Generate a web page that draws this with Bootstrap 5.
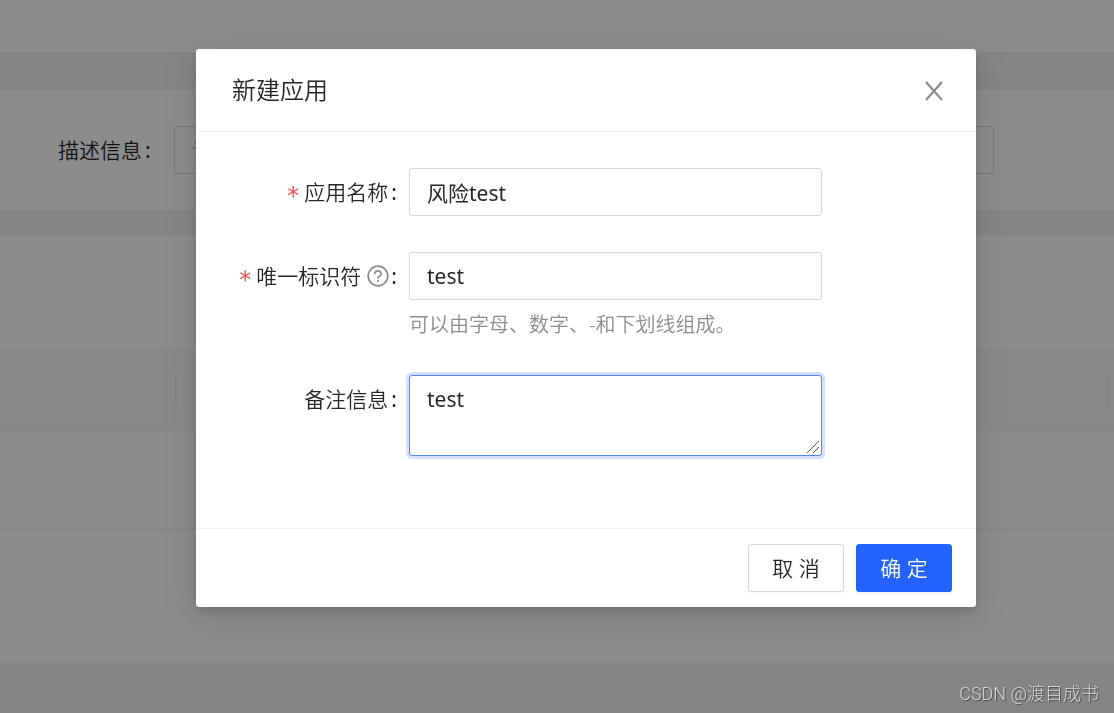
<!DOCTYPE html>
<html lang="zh-CN">
<head>
<meta charset="utf-8">
<meta name="viewport" content="width=device-width, initial-scale=1">
<title>新建应用</title>
<link rel="stylesheet" href="https://cdn.jsdelivr.net/npm/bootstrap@5.3.0/dist/css/bootstrap.min.css">
<style>
  body {
    font-family: "Noto Sans", "Noto Sans CJK SC", sans-serif;
    font-size: 21px;
    font-weight: 350;
    line-height: 32px;
    color: #262626;
    background: #f0f2f5;
    overflow: hidden;
  }

  /* page behind the dialog */
  .top-bar { height: 54px; border-bottom: 1px solid #e8e8e8; }
  .search-panel { margin-top: 36px; padding: 36px 120px 36px 58px; }
  .search-panel label { width: 116px; }
  .list-panel { margin-top: 25px; padding: 114px 0 133px; }
  .list-table { table-layout: fixed; border-collapse: separate; border-spacing: 0; }
  .list-table th { height: 83px; background: #fafafa; border-bottom: 1px solid #f0f0f0; padding: 0; }
  .list-table td { height: 98px; border-bottom: 1px solid #f0f0f0; }
  .col-first { width: 177px; }
  .col-last { width: 4px; }
  .col-rule { height: 34px; border-right: 2px solid #f0f0f0; }

  .field {
    height: 48px;
    padding: 7px 17px;
    font-size: 21px;
    line-height: 32px;
    font-weight: 400;
    color: #262626;
    border: 1px solid #d9d9d9;
    border-radius: 3px;
  }
  .field::placeholder { color: #bfbfbf; }
  .field.note {
    min-height: 81px;
    resize: none;
    border-color: #5286f7;
    box-shadow: 0 0 0 3px #d3e0ff;
  }
  .grip { right: 2px; bottom: 2px; color: #555; pointer-events: none; }

  /* dialog */
  .modal-backdrop { --bs-backdrop-opacity: .45; }
  .app-modal { padding-left: 58px; --bs-modal-width: 780px; }
  .app-modal .modal-dialog { margin-top: 49px; max-width: 780px; }
  .app-modal .modal-content {
    border: 0;
    border-radius: 3px;
    color: #262626;
    box-shadow: 0 9px 42px 12px rgba(0, 0, 0, .05), 0 9px 24px rgba(0, 0, 0, .08), 0 4px 9px rgba(0, 0, 0, .12);
  }
  .app-modal .modal-header { padding: 24px 32px 24px 36px; border-bottom: 1px solid #f0f0f0; }
  .app-modal .modal-title { font-size: 24px; line-height: 34px; font-weight: inherit; }
  .app-modal .modal-body { padding: 36px 36px 72px; }
  .app-modal .modal-footer { padding: 15px 24px; gap: 12px; border-top: 1px solid #f0f0f0; }
  .app-modal .modal-footer > * { margin: 0; }
  .form-line { margin-bottom: 36px; }
  .form-line:last-child { margin-bottom: 0; }
  .field-label { height: 48px; padding-right: 12px; white-space: nowrap; }
  .star { font-family: "DejaVu Sans", sans-serif; font-size: 24px; font-weight: 400; color: #ff4d4f; margin-right: 5px; padding-top: 8px; }
  .colon { font-weight: 400; padding-left: 3px; }
  .help { margin: 0 -1px 0 6px; color: #8c8c8c; }
  .hint { margin-top: 10px; line-height: 29px; font-size: 20px; color: #8c8c8c; }

  .close-x { color: #8c8c8c; background: none; border: 0; padding: 2px 0 0; line-height: 0; }
  .act {
    width: 96px;
    height: 48px;
    padding: 2px 0 0;
    font-size: 21px;
    font-weight: inherit;
    color: #262626;
    background: #fff;
    border: 1px solid #d9d9d9;
    border-radius: 3px;
    box-shadow: 0 3px 0 rgba(0, 0, 0, .02);
  }
  .act.ok { color: #fff; background: #2563ff; border-color: #2563ff; box-shadow: 0 3px 0 rgba(0, 0, 0, .045); }

  .watermark {
    right: 15px;
    bottom: 6px;
    z-index: 1100;
    font: 300 18px/26px Roboto, "Noto Sans CJK SC", sans-serif;
    color: #d8d8d8;
    text-shadow: 1px 1px 1px #444;
  }
</style>
</head>
<body>
<header class="top-bar bg-white"></header>
<main>
  <form class="search-panel bg-white d-flex align-items-center">
    <label for="desc" class="flex-shrink-0">描述信息<span class="colon">:</span></label>
    <input id="desc" class="form-control field" type="text" placeholder="请输入">
  </form>
  <section class="list-panel bg-white">
    <table class="list-table w-100">
      <colgroup><col class="col-first"><col><col class="col-last"></colgroup>
      <thead>
        <tr>
          <th><div class="col-rule"></div></th>
          <th><div class="col-rule"></div></th>
          <th></th>
        </tr>
      </thead>
      <tbody><tr><td></td><td></td><td></td></tr></tbody>
    </table>
  </section>
</main>

<div class="modal-backdrop show"></div>
<div class="modal app-modal d-block" role="dialog" aria-modal="true" aria-labelledby="dialogTitle">
  <div class="modal-dialog">
    <form class="modal-content">
      <div class="modal-header">
        <h1 class="modal-title" id="dialogTitle">新建应用</h1>
        <button type="button" class="close-x" aria-label="关闭">
          <svg width="20" height="20" viewBox="0 0 20 20" fill="none" stroke="currentColor" stroke-width="2.2"><path d="M2 1 18 19M18 1 2 19"/></svg>
        </button>
      </div>
      <div class="modal-body">
        <div class="row g-0 form-line">
          <label for="appName" class="col-3 field-label d-flex align-items-center justify-content-end"><span class="star">*</span>应用名称<span class="colon">:</span></label>
          <div class="col-7"><input id="appName" class="form-control field" type="text" value="风险test"></div>
        </div>
        <div class="row g-0 form-line">
          <label for="appKey" class="col-3 field-label d-flex align-items-center justify-content-end"><span class="star">*</span>唯一标识符<svg class="help" width="22" height="22" viewBox="0 0 22 22" fill="none" stroke="currentColor" stroke-width="1.7"><circle cx="11" cy="11" r="9.8"/><path d="M7.8 8.9C7.8 5 14.2 5 14.2 8.7c0 2.3-3.2 2.4-3.2 4.3v.4"/><path d="M11 14.8v1.9" stroke-width="2"/></svg><span class="colon">:</span></label>
          <div class="col-7">
            <input id="appKey" class="form-control field" type="text" value="test" aria-describedby="keyHint">
            <div class="hint text-nowrap" id="keyHint">可以由字母、数字、-和下划线组成。</div>
          </div>
        </div>
        <div class="row g-0 form-line">
          <label for="appNote" class="col-3 field-label d-flex align-items-center justify-content-end">备注信息<span class="colon">:</span></label>
          <div class="col-7 position-relative">
            <textarea id="appNote" class="form-control field note">test</textarea>
            <svg class="grip position-absolute" width="14" height="14" viewBox="0 0 14 14" fill="none" stroke="currentColor"><path d="M1 13 13 1M7 13l6-6"/></svg>
          </div>
        </div>
      </div>
      <div class="modal-footer">
        <button type="button" class="btn act">取 消</button>
        <button type="submit" class="btn act ok">确 定</button>
      </div>
    </form>
  </div>
</div>

<div class="watermark position-fixed">CSDN @渡目成书</div>
<script src="https://cdn.jsdelivr.net/npm/bootstrap@5.3.0/dist/js/bootstrap.bundle.min.js"></script>
</body>
</html>
